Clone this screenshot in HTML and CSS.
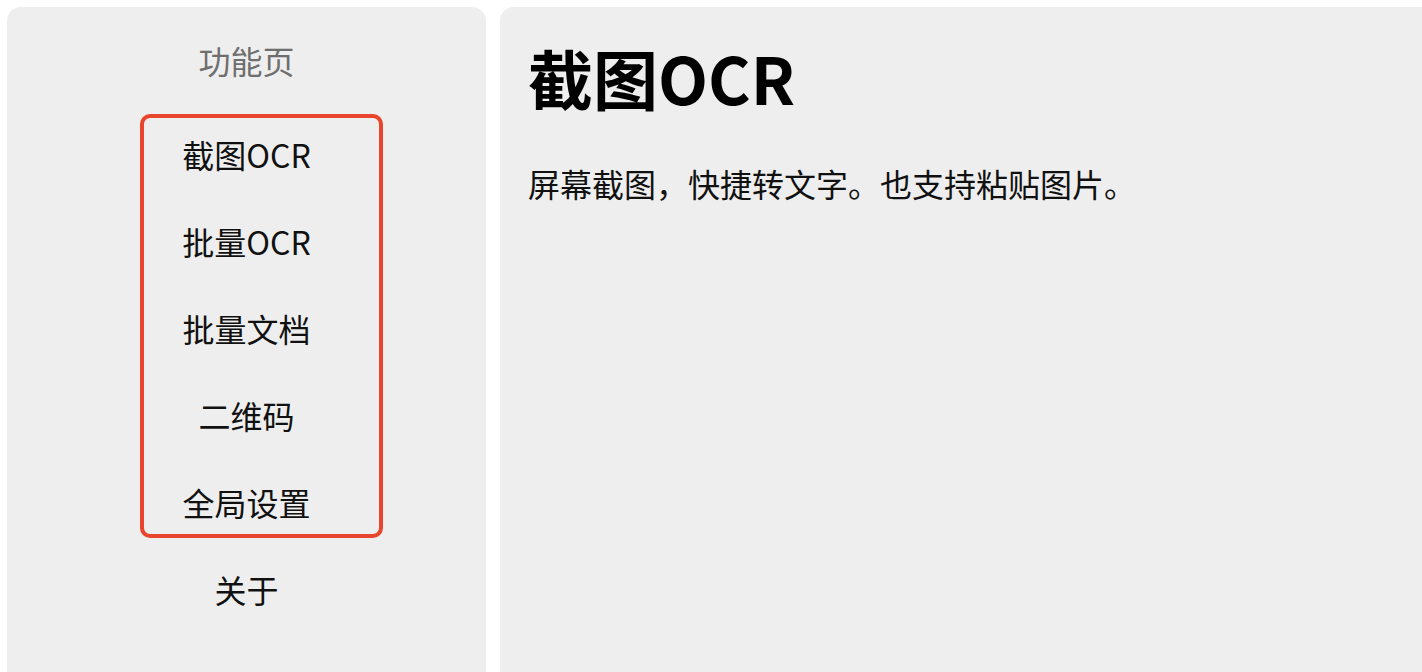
FILE: index.html
```html
<!DOCTYPE html>
<html lang="zh-CN">
<head>
<meta charset="utf-8">
<title>截图OCR</title>
<link rel="stylesheet" href="styles.css">
</head>
<body>
<div class="app">
  <aside class="sidebar">
    <div class="side-title">功能页</div>
    <nav class="nav">
      <a class="nav-item">截图OCR</a>
      <a class="nav-item">批量OCR</a>
      <a class="nav-item">批量文档</a>
      <a class="nav-item">二维码</a>
      <a class="nav-item">全局设置</a>
      <a class="nav-item">关于</a>
    </nav>
    <div class="highlight"></div>
  </aside>
  <main class="main">
    <h1 class="heading">截图OCR</h1>
    <p class="desc">屏幕截图，快捷转文字。也支持粘贴图片。</p>
  </main>
</div>
</body>
</html>
```
FILE: styles.css
```css
html, body {
  margin: 0;
  padding: 0;
  background: #ffffff;
  overflow: hidden;
  height: 100%;
}
body {
  font-family: "Noto Sans CJK SC", "Noto Sans", sans-serif;
  color: #111111;
}
.app {
  display: grid;
  grid-template-columns: 479px 960px;
  column-gap: 14px;
  padding: 7px 0 0 7px;
  height: 700px;
  box-sizing: border-box;
}
.sidebar {
  position: relative;
  background: #eeeeee;
  border-radius: 14px;
  padding-top: 29px;
  text-align: center;
}
.side-title {
  font-size: 32px;
  line-height: 48px;
  color: #6e6e6e;
}
.nav {
  display: flex;
  flex-direction: column;
  margin-top: 27px;
}
.nav-item {
  display: block;
  font-size: 32px;
  line-height: 87px;
  color: #111111;
  text-decoration: none;
}
.highlight {
  position: absolute;
  left: 133px;
  top: 107px;
  width: 243px;
  height: 424px;
  box-sizing: border-box;
  border: 4px solid #e8452c;
  border-radius: 10px;
}
.main {
  background: #eeeeee;
  border-radius: 14px;
  padding: 31px 28px 0 28px;
}
.heading {
  margin: 0;
  font-size: 65px;
  line-height: 78px;
  font-weight: 700;
  color: #000000;
}
.desc {
  margin: 43px 0 0 0;
  font-size: 32px;
  line-height: 48px;
  color: #111111;
}
```
